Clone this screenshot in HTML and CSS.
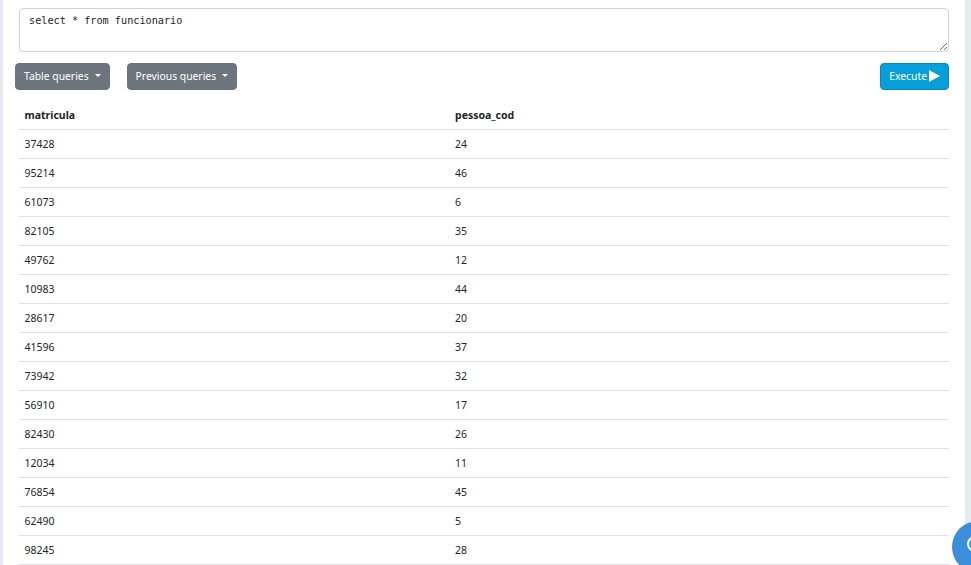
FILE: index.html
```html
<!DOCTYPE html>
<html lang="en">
<head>
<meta charset="utf-8">
<title>Query</title>
<link rel="stylesheet" href="styles.css">
</head>
<body>
<main class="card">
  <div class="editor"><textarea class="sql" spellcheck="false">select * from funcionario</textarea></div>
  <div class="toolbar">
    <button class="btn btn-grey">Table queries<span class="caret"></span></button>
    <button class="btn btn-grey">Previous queries<span class="caret"></span></button>
    <button class="btn btn-run">Execute<svg class="play" viewBox="0 0 11 12" width="11" height="12"><path d="M0 0 L11 6 L0 12 Z" fill="#fff"/></svg></button>
  </div>
  <table class="results">
    <thead><tr><th class="col-a">matricula</th><th>pessoa_cod</th></tr></thead>
    <tbody>
      <tr><td>37428</td><td>24</td></tr>
      <tr><td>95214</td><td>46</td></tr>
      <tr><td>61073</td><td>6</td></tr>
      <tr><td>82105</td><td>35</td></tr>
      <tr><td>49762</td><td>12</td></tr>
      <tr><td>10983</td><td>44</td></tr>
      <tr><td>28617</td><td>20</td></tr>
      <tr><td>41596</td><td>37</td></tr>
      <tr><td>73942</td><td>32</td></tr>
      <tr><td>56910</td><td>17</td></tr>
      <tr><td>82430</td><td>26</td></tr>
      <tr><td>12034</td><td>11</td></tr>
      <tr><td>76854</td><td>45</td></tr>
      <tr><td>62490</td><td>5</td></tr>
      <tr><td>98245</td><td>28</td></tr>
    </tbody>
  </table>
</main>
<div class="help"><span class="help-ring"></span></div>
</body>
</html>
```
FILE: styles.css
```css
html, body { margin: 0; height: 565px; overflow: hidden; }
body {
  background: #e4ecf2;
  font-family: "Noto Sans", "Open Sans", sans-serif;
  font-size: 10.5px;
  color: #212529;
  padding: 0 6px 0 3px;
  box-sizing: border-box;
}
.card {
  background: #fff;
  height: 565px;
  padding: 8px 16px 0 16px;
  box-sizing: border-box;
}
.editor { height: 44px; }
.sql {
  display: block;
  width: 100%;
  height: 44px;
  box-sizing: border-box;
  border: 1px solid #ced4da;
  border-radius: 4px;
  padding: 5px 9px;
  margin: 0;
  font-family: "DejaVu Sans Mono", monospace;
  font-size: 10.2px;
  line-height: 14px;
  color: #212529;
  background: #fff;
  resize: vertical;
  outline: none;
}
.toolbar {
  display: flex;
  gap: 17px;
  margin: 11px 0 11px -4px;
}
.btn {
  height: 27px;
  border-radius: 4px;
  font-family: inherit;
  font-size: 10.35px;
  color: #fff;
  padding: 0 8px 2px;
  display: inline-flex;
  align-items: center;
  border: 1px solid transparent;
  box-sizing: border-box;
}
.btn-grey { background: #6c757d; border-color: #6c757d; }
.btn-run {
  margin-left: auto;
  background: #069fd9;
  border-color: #0688c0;
  gap: 2px;
}
.caret {
  width: 0;
  height: 0;
  margin-left: 6px;
  border-top: 3px solid #fff;
  border-left: 3px solid transparent;
  border-right: 3px solid transparent;
}
.play { display: block; }
.results {
  width: 100%;
  border-collapse: collapse;
  table-layout: fixed;
}
.results th, .results td {
  height: 29px;
  padding: 0 5px 0 5.5px;
  box-sizing: border-box;
  text-align: left;
  border-bottom: 1px solid #dee2e6;
  font-size: 10.5px;
}
.results th { font-weight: 700; height: 28px; }
.col-a { width: 430.5px; }
.help {
  position: fixed;
  left: 952px;
  top: 521px;
  width: 52px;
  height: 52px;
  border-radius: 50%;
  background: #3b8edb;
}
.help-ring {
  position: absolute;
  left: 15px;
  top: 15px;
  width: 16px;
  height: 16px;
  border: 2px solid #fff;
  border-radius: 50%;
  box-sizing: border-box;
}
```
